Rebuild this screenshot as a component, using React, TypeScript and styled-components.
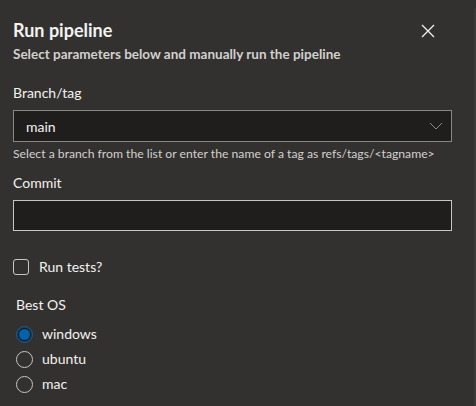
import React, { useState } from 'react'
import styled, { createGlobalStyle } from 'styled-components'

const COLORS = {
  bg: '#323130',
  field: '#1f1e1d',
  text: '#f3f2f1',
  subtle: '#d2d0ce',
  border: '#8a8886',
  borderStrong: '#c8c6c4',
  accent: '#0063b1',
}

const GlobalStyle = createGlobalStyle`
  html, body {
    margin: 0;
    padding: 0;
    background: ${COLORS.bg};
  }
  body {
    font-family: Lato, "Liberation Sans", sans-serif;
    color: ${COLORS.text};
  }
`

const Frame = styled.div`
  display: flex;
  width: 476px;
  height: 406px;
  overflow: hidden;
  background: ${COLORS.bg};
`

const Panel = styled.div`
  flex: 1;
  padding: 16px 22px 0 13px;
  display: flex;
  flex-direction: column;
`

const Rail = styled.div`
  width: 2px;
  margin-top: 8px;
  background: #3b3a39;
  border-top-left-radius: 2px;
`

const Header = styled.div`
  display: flex;
  justify-content: space-between;
  align-items: flex-start;
`

const Title = styled.h1`
  margin: 0;
  font-size: 18px;
  line-height: 28px;
  font-weight: 700;
`

const Subtitle = styled.p`
  margin: 0;
  font-size: 13.5px;
  line-height: 20px;
  font-weight: 700;
  color: ${COLORS.subtle};
`

const CloseButton = styled.button`
  background: none;
  border: none;
  padding: 0;
  margin: 8px 17px 0 0;
  width: 14px;
  height: 14px;
  color: ${COLORS.text};
  cursor: pointer;
  display: flex;
`

const Label = styled.label<{ $indent?: boolean }>`
  display: block;
  font-size: 14px;
  line-height: 20px;
  padding-left: ${p => (p.$indent ? '3px' : '0')};
`

const Field = styled.div<{ $strong?: boolean }>`
  display: flex;
  align-items: center;
  height: ${p => (p.$strong ? 29 : 30)}px;
  margin-top: 7px;
  border: 1px solid ${p => (p.$strong ? COLORS.borderStrong : COLORS.border)};
  background: ${COLORS.field};
`

const Input = styled.input`
  flex: 1;
  height: 100%;
  background: transparent;
  border: none;
  outline: none;
  padding: 0 12px;
  font-family: inherit;
  font-size: 14px;
  color: ${COLORS.text};
`

const Chevron = styled.span`
  display: flex;
  padding: 0 8px 0 0;
  color: #8a8886;
`

const Hint = styled.div`
  font-size: 12.2px;
  line-height: 16px;
  margin-top: 4px;
  color: ${COLORS.subtle};
`

const Section = styled.div<{ $gap: number }>`
  margin-top: ${p => p.$gap}px;
`

const CheckRow = styled.label`
  display: flex;
  align-items: center;
  gap: 10px;
  font-size: 14px;
  line-height: 20px;
  cursor: pointer;
`

const Box = styled.span`
  width: 14px;
  height: 14px;
  border: 1px solid ${COLORS.borderStrong};
  border-radius: 3px;
`

const RadioList = styled.div`
  display: flex;
  flex-direction: column;
  gap: 5px;
  margin-top: 9px;
  padding-left: 3px;
`

const RadioRow = styled.label`
  display: flex;
  align-items: center;
  gap: 9px;
  font-size: 14px;
  line-height: 20px;
  cursor: pointer;
`

const Dot = styled.span<{ $checked: boolean }>`
  box-sizing: border-box;
  width: 17px;
  height: 17px;
  border-radius: 50%;
  border: 1px solid ${p => (p.$checked ? COLORS.accent : COLORS.borderStrong)};
  display: flex;
  align-items: center;
  justify-content: center;

  &::after {
    content: '';
    width: 11px;
    height: 11px;
    border-radius: 50%;
    background: ${p => (p.$checked ? COLORS.accent : 'transparent')};
    box-shadow: ${p => (p.$checked ? `0 0 0 1px #1b1a19` : 'none')};
  }
`

const OPTIONS = ['windows', 'ubuntu', 'mac']

const App: React.FunctionComponent = () => {
  const [os, setOs] = useState('windows')

  return (
    <Frame>
      <GlobalStyle />
      <Panel>
        <Header>
          <div>
            <Title>Run pipeline</Title>
            <Subtitle>Select parameters below and manually run the pipeline</Subtitle>
          </div>
          <CloseButton aria-label="Close">
            <svg width="14" height="14" viewBox="0 0 14 14">
              <path d="M1 1 L13 13 M13 1 L1 13" stroke="currentColor" strokeWidth="1.3" />
            </svg>
          </CloseButton>
        </Header>

        <Section $gap={19}>
          <Label>Branch/tag</Label>
          <Field>
            <Input defaultValue="main" />
            <Chevron>
              <svg width="14" height="8" viewBox="0 0 14 8">
                <path d="M1 1 L7 7 L13 1" fill="none" stroke="currentColor" strokeWidth="1" />
              </svg>
            </Chevron>
          </Field>
          <Hint>Select a branch from the list or enter the name of a tag as refs/tags/&lt;tagname&gt;</Hint>
        </Section>

        <Section $gap={11}>
          <Label>Commit</Label>
          <Field $strong>
            <Input />
          </Field>
        </Section>

        <Section $gap={26}>
          <CheckRow>
            <Box />
            Run tests?
          </CheckRow>
        </Section>

        <Section $gap={18}>
          <Label $indent>Best OS</Label>
          <RadioList>
            {OPTIONS.map(o => (
              <RadioRow key={o} onClick={() => setOs(o)}>
                <Dot $checked={os === o} />
                {o}
              </RadioRow>
            ))}
          </RadioList>
        </Section>
      </Panel>
      <Rail />
    </Frame>
  )
}

export default App
